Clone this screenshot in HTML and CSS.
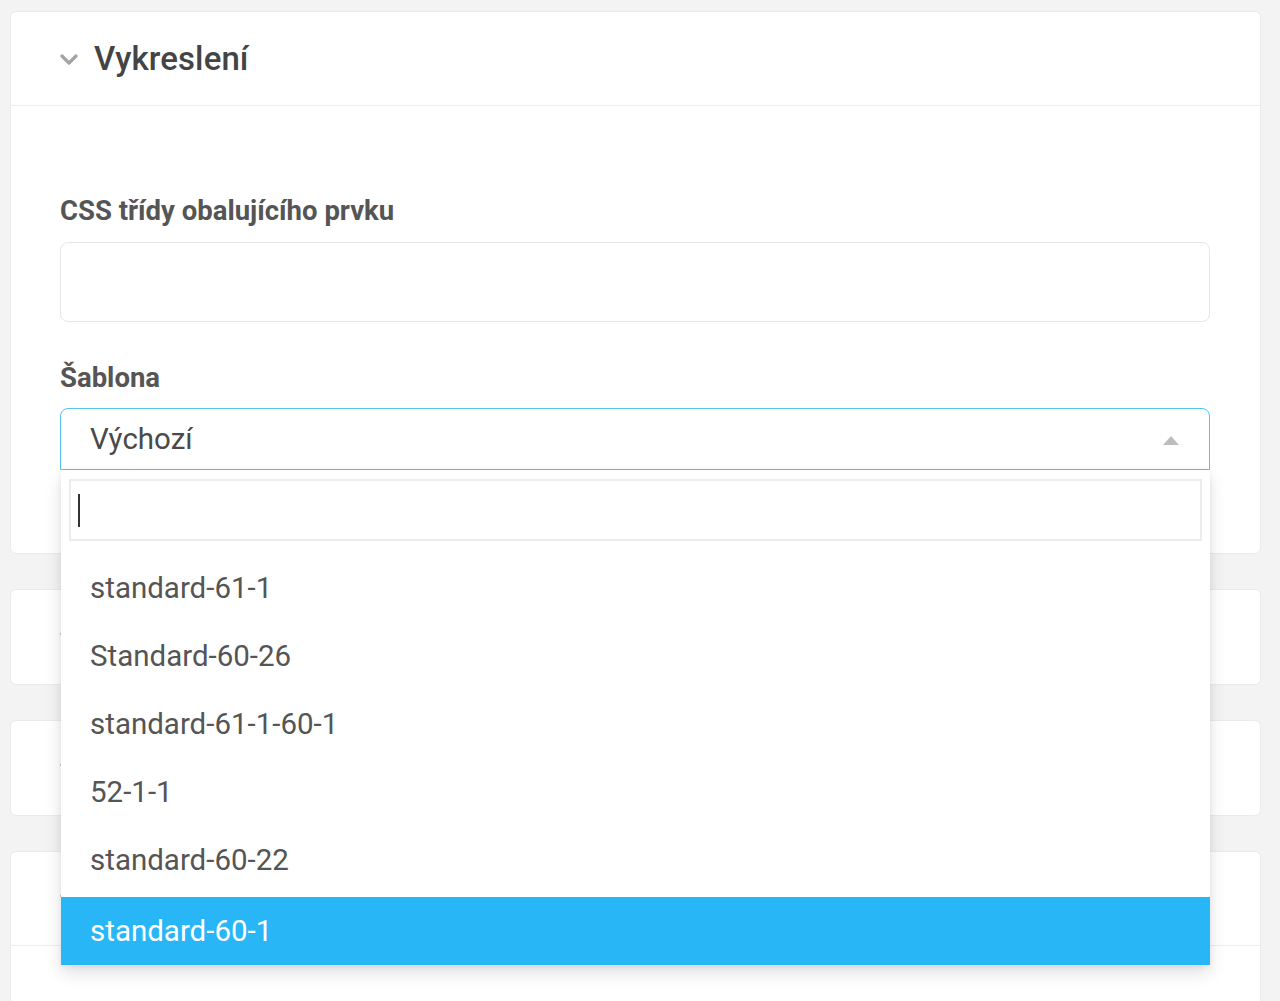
FILE: index.html
```html
<!DOCTYPE html>
<html lang="cs">
<head>
<meta charset="utf-8">
<title>Vykreslení</title>
<link rel="stylesheet" href="styles.css">
</head>
<body>
<div class="page">
  <section class="card">
    <header class="card-head">
      <svg class="chev" viewBox="0 0 18 12" width="18" height="12"><path d="M2 2 L9 9 L16 2" fill="none" stroke="#a3a3a3" stroke-width="3.2" stroke-linecap="round" stroke-linejoin="round"/></svg>
      <h2 class="card-title">Vykreslení</h2>
    </header>
    <div class="card-body">
      <label class="field-label">CSS třídy obalujícího prvku</label>
      <div class="text-input"></div>
      <label class="field-label second">Šablona</label>
      <div class="select-wrap">
        <div class="select open">
          <span class="select-value">Výchozí</span>
          <span class="select-arrow"></span>
        </div>
        <div class="dropdown">
          <div class="search-box"><span class="caret"></span></div>
          <ul class="options">
            <li class="option">standard-61-1</li>
            <li class="option">Standard-60-26</li>
            <li class="option">standard-61-1-60-1</li>
            <li class="option">52-1-1</li>
            <li class="option">standard-60-22</li>
            <li class="option active">standard-60-1</li>
          </ul>
        </div>
      </div>
    </div>
  </section>
  <section class="card">
    <header class="card-head collapsed">
      <svg class="chev" viewBox="0 0 18 12" width="18" height="12"><path d="M2 2 L9 9 L16 2" fill="none" stroke="#a3a3a3" stroke-width="3.2" stroke-linecap="round" stroke-linejoin="round"/></svg>
    </header>
  </section>
  <section class="card">
    <header class="card-head collapsed">
      <svg class="chev" viewBox="0 0 18 12" width="18" height="12"><path d="M2 2 L9 9 L16 2" fill="none" stroke="#a3a3a3" stroke-width="3.2" stroke-linecap="round" stroke-linejoin="round"/></svg>
    </header>
  </section>
  <section class="card">
    <header class="card-head">
      <svg class="chev" viewBox="0 0 18 12" width="18" height="12"><path d="M2 2 L9 9 L16 2" fill="none" stroke="#a3a3a3" stroke-width="3.2" stroke-linecap="round" stroke-linejoin="round"/></svg>
    </header>
    <div class="card-body tall"></div>
  </section>
</div>
</body>
</html>
```
FILE: styles.css
```css
* { box-sizing: border-box; }
html, body {
  margin: 0;
  padding: 0;
  background: #f3f3f3;
  font-family: Roboto, "Liberation Sans", sans-serif;
  color: #555;
  overflow: hidden;
}
.page {
  padding: 11px 19px 0 10px;
  display: flex;
  flex-direction: column;
  gap: 35px;
}
.card {
  background: #fff;
  border: 1px solid #ebebeb;
  border-radius: 6px;
}
.card-head {
  height: 94px;
  display: flex;
  align-items: center;
  padding-left: 49px;
  gap: 16px;
  border-bottom: 1px solid #eeeeee;
}
.card-head.collapsed { border-bottom: none; }
.chev { flex: none; margin-top: 2px; }
.card-title {
  margin: 0;
  font-size: 33px;
  font-weight: 500;
  color: #444;
  letter-spacing: 0.1px;
}
.card-body {
  padding: 89px 50px 83px 49px;
}
.card-body.tall { height: 200px; padding: 0; }
.field-label {
  display: block;
  font-size: 27.5px;
  line-height: 32px;
  font-weight: 700;
  color: #555;
  margin-bottom: 15px;
}
.field-label.second { margin-top: 40px; margin-bottom: 14px; }
.text-input {
  height: 80px;
  border: 1px solid #e6e6e6;
  border-radius: 8px;
  background: #fff;
}
.select-wrap { position: relative; }
.select {
  height: 62px;
  border: 1px solid #55c1f7;
  border-radius: 8px 8px 0 0;
  display: flex;
  align-items: center;
  justify-content: space-between;
  padding: 0 30px 0 29px;
}
.select-value {
  font-size: 29.5px;
  color: #4a4a4a;
}
.select-arrow {
  width: 0;
  height: 0;
  border-left: 8px solid transparent;
  border-right: 8px solid transparent;
  border-bottom: 9px solid #bdbdbd;
  margin-top: 2px;
}
.dropdown {
  position: absolute;
  top: 62px;
  left: 1px;
  right: 0;
  background: #fff;
  box-shadow: 0 8px 16px rgba(0, 0, 0, 0.12), 0 2px 6px rgba(0, 0, 0, 0.06);
  z-index: 5;
  padding-top: 9px;
}
.search-box {
  margin: 0 8px 0 8px;
  height: 62px;
  border: 2px solid #ececec;
  display: flex;
  align-items: center;
  padding-left: 7px;
}
.caret {
  width: 2px;
  height: 33px;
  background: #333;
}
.options {
  list-style: none;
  margin: 16px 0 0 0;
  padding: 0;
}
.option {
  height: 68px;
  display: flex;
  align-items: center;
  padding-left: 29px;
  font-size: 29.5px;
  color: #555;
  padding-bottom: 6px;
}
.option.active {
  background: #29b6f6;
  color: #fff;
  padding-bottom: 0;
}
```
